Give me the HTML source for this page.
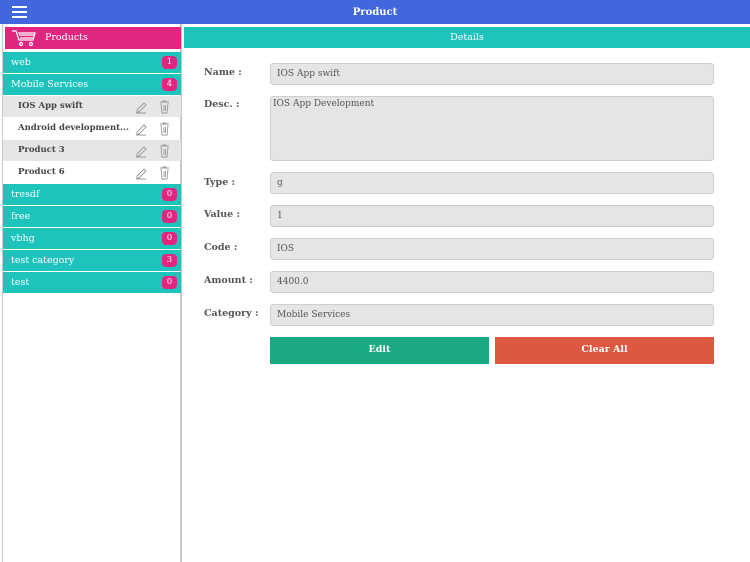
<!DOCTYPE html>
<html><head><style>
*{margin:0;padding:0;box-sizing:border-box}
body{width:750px;height:562px;background:#fff;position:relative;overflow:hidden;font-family:"DejaVu Serif","Liberation Serif",serif;font-size:10px;color:#555}
.a{position:absolute}
.top{left:0;top:0;width:750px;height:24px;background:#4266dc;color:#fff;font-weight:bold;font-size:10px;text-align:center;line-height:25px}
.left{left:2px;top:24px;width:180px;height:538px;border-right:2px solid #c8c8c8;border-left:1px solid #c8c8c8}
.cat{left:3px;width:178px;height:21px;background:#1dc4bb;color:#fff;font-size:9.5px;line-height:21px;padding-left:8px}
.badge{position:absolute;right:4px;top:4px;width:15px;height:13px;border-radius:4px;background:#e0267f;color:#fff;font-size:8.5px;line-height:13px;text-align:center}
.prod{left:3px;width:178px;height:21px;color:#444;font-weight:bold;font-size:8.5px;line-height:21px;padding-left:15px}
.g{background:#e6e6e6}
.lbl{left:204px;font-weight:bold;font-size:9.5px;color:#555}
.in{left:270px;width:444px;height:22px;background:#e5e5e5;border:1px solid #cfcfcf;border-radius:3px;font-size:9px;color:#555;padding:5px 6px}
.btn{top:337px;height:27px;color:#fff;font-weight:bold;font-size:9.5px;text-align:center;line-height:25px}
</style></head><body>
<div class="a top">Product
<svg class="a" style="left:12px;top:6px" width="16" height="12"><rect y="0" width="15" height="2" fill="#fff"/><rect y="5" width="15" height="2" fill="#fff"/><rect y="10" width="15" height="2" fill="#fff"/></svg></div>
<div class="a left"></div>
<div class="a" style="left:5px;top:27px;width:176px;height:22px;background:#e0267f;color:#fff;font-size:9.5px;line-height:21px;padding-left:40px">Products
<svg class="a" style="left:6px;top:2px" width="26" height="18" fill="none" stroke="#fff" stroke-width="1.2"><path d="M1 2h4l3 9h14l2-7H7"/><path d="M8 6h15M9 9h13"/><circle cx="10" cy="15" r="1.5"/><circle cx="20" cy="15" r="1.5"/></svg></div>
<div class="a cat" style="top:52px">web<span class="badge">1</span></div>
<div class="a cat" style="top:74px">Mobile Services<span class="badge">4</span></div>
<div class="a prod g" style="top:96px">IOS App swift</div>
<div class="a prod" style="top:118px">Android development...</div>
<div class="a prod g" style="top:140px">Product 3</div>
<div class="a prod" style="top:162px">Product 6</div>
<div class="a cat" style="top:184px">tresdf<span class="badge">0</span></div>
<div class="a cat" style="top:206px">free<span class="badge">0</span></div>
<div class="a cat" style="top:228px">vbhg<span class="badge">0</span></div>
<div class="a cat" style="top:250px">test category<span class="badge">3</span></div>
<div class="a cat" style="top:272px">test<span class="badge">0</span></div>
<svg class="a" style="left:130px;top:96px" width="50" height="88" fill="none" stroke="#999" stroke-width="0.9">
<g id="r"><path d="M7 14l7-7 2 2-7 7H7z M6 17h10"/><path d="M30 6h9M33 6v-1h3v1M31 7l1 10h5l1-10M34 9v6M35.5 9v6"/></g>
<use href="#r" y="22"/><use href="#r" y="44"/><use href="#r" y="66"/></svg>
<div class="a" style="left:184px;top:27px;width:566px;height:21px;background:#1dc4bb;color:#fff;font-size:9.5px;text-align:center;line-height:21px">Details</div>
<div class="a lbl" style="top:67px">Name :</div><div class="a in" style="top:63px">IOS App swift</div>
<div class="a lbl" style="top:99px">Desc. :</div><div class="a in" style="top:96px;height:65px;padding-top:2px;padding-left:2px">IOS App Development</div>
<div class="a lbl" style="top:177px">Type :</div><div class="a in" style="top:172px">g</div>
<div class="a lbl" style="top:209px">Value :</div><div class="a in" style="top:205px">1</div>
<div class="a lbl" style="top:242px">Code :</div><div class="a in" style="top:238px">IOS</div>
<div class="a lbl" style="top:275px">Amount :</div><div class="a in" style="top:271px">4400.0</div>
<div class="a lbl" style="top:308px">Category :</div><div class="a in" style="top:304px">Mobile Services</div>
<div class="a btn" style="left:270px;width:219px;background:#1aaa83">Edit</div>
<div class="a btn" style="left:495px;width:219px;background:#dc5843">Clear All</div>
</body></html>
